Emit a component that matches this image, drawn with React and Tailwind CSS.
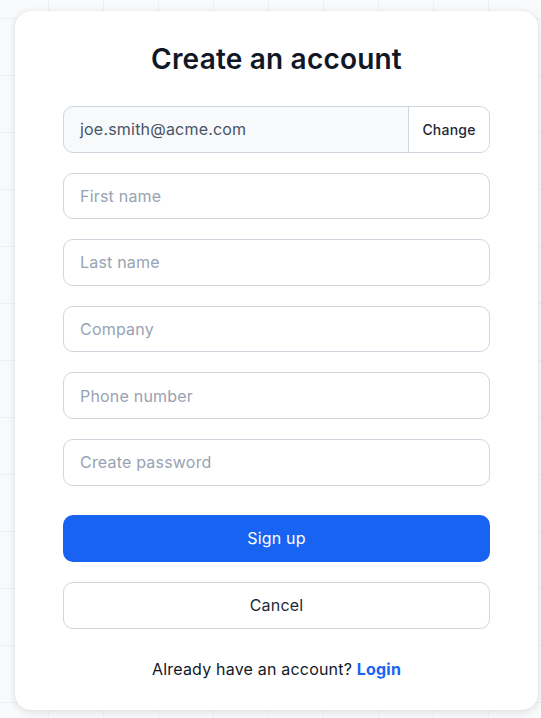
import React from "react";

const inputCls =
  "h-[46.6px] w-full rounded-[10px] border border-[#d0d5dd] bg-white px-4 text-[16px] text-[#344054] placeholder:text-[#98a2b3] outline-none tracking-[0.2px]";

export default function App() {
  return (
    <div
      className="min-h-[718px] w-[541px] overflow-hidden bg-[#f9fafb] bg-[linear-gradient(to_right,#eef0f3_1px,transparent_1px),linear-gradient(to_bottom,#eef0f3_1px,transparent_1px)] bg-[size:55px_57px] bg-[position:48px_18px] pl-[15px] pt-[11px] tracking-[0.2px]"
      style={{ fontFamily: "Inter, 'Noto Sans', sans-serif" }}
    >
      <div className="flex h-[699px] w-[523px] flex-col rounded-[16px] bg-white px-12 pt-[28px] shadow-[0_2px_8px_rgba(16,24,40,0.12),0_0_2px_rgba(16,24,40,0.06)]">
        <h1 className="text-center text-[28px] font-semibold leading-[40px] text-[#101828]">
          Create an account
        </h1>
        <div className="mt-[27px] flex flex-col gap-5">
          <div className="flex h-[46.6px] overflow-hidden rounded-[10px] border border-[#d0d5dd] bg-[#f8f9fb]">
            <div className="flex flex-1 items-center px-4 text-[16px] text-[#475467]">
              joe.smith@acme.com
            </div>
            <button className="w-[81px] border-l border-[#d0d5dd] bg-white text-[14px] font-medium text-[#1d2939]">
              Change
            </button>
          </div>
          <input className={inputCls} placeholder="First name" />
          <input className={inputCls} placeholder="Last name" />
          <input className={inputCls} placeholder="Company" />
          <input className={inputCls} placeholder="Phone number" />
          <input className={inputCls} placeholder="Create password" type="password" />
        </div>
        <button className="mt-[29px] h-[47px] w-full rounded-[10px] bg-[#1863f1] text-[16px] font-normal tracking-[0.2px] text-white">
          Sign up
        </button>
        <button className="mt-5 h-[47px] w-full rounded-[10px] border border-[#d0d5dd] bg-white text-[16px] font-normal tracking-[0.2px] text-[#1d2939]">
          Cancel
        </button>
        <p className="mt-[28px] text-center text-[16px] leading-[24px] text-[#101828]">
          Already have an account?{" "}
          <a className="font-bold text-[#1863f1]">Login</a>
        </p>
      </div>
    </div>
  );
}
